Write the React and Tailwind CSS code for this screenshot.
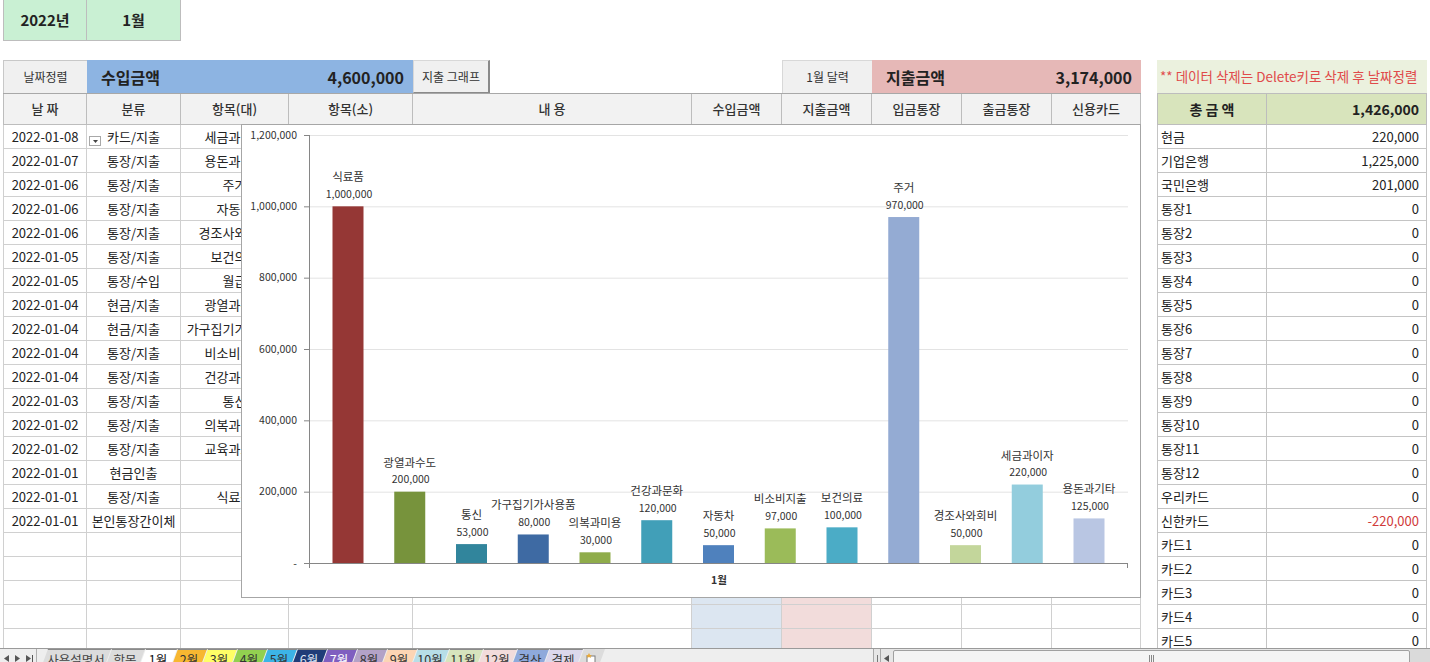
import React from "react";

const colW = ["w-[84px]", "w-[94px]", "w-[108px]", "w-[124px]", "w-[279px]", "w-[90px]", "w-[90px]", "w-[90px]", "w-[90px]", "w-[89px]"];
const heads = ["날 짜", "분류", "항목(대)", "항목(소)", "내 용", "수입금액", "지출금액", "입금통장", "출금통장", "신용카드"];

const rows = [
  ["2022-01-08", "카드/지출", "세금과이자"],
  ["2022-01-07", "통장/지출", "용돈과기타"],
  ["2022-01-06", "통장/지출", "주거"],
  ["2022-01-06", "통장/지출", "자동차"],
  ["2022-01-06", "통장/지출", "경조사와회비"],
  ["2022-01-05", "통장/지출", "보건의료"],
  ["2022-01-05", "통장/수입", "월급"],
  ["2022-01-04", "현금/지출", "광열과수도"],
  ["2022-01-04", "현금/지출", "가구집기가사용품"],
  ["2022-01-04", "통장/지출", "비소비지출"],
  ["2022-01-04", "통장/지출", "건강과문화"],
  ["2022-01-03", "통장/지출", "통신"],
  ["2022-01-02", "통장/지출", "의복과미용"],
  ["2022-01-02", "통장/지출", "교육과보육"],
  ["2022-01-01", "현금인출", ""],
  ["2022-01-01", "통장/지출", "식료품"],
  ["2022-01-01", "본인통장간이체", ""],
  ["", "", ""],
  ["", "", ""],
  ["", "", ""],
  ["", "", ""],
  ["", "", ""],
];

const accounts = [
  ["현금", "220,000"],
  ["기업은행", "1,225,000"],
  ["국민은행", "201,000"],
  ["통장1", "0"],
  ["통장2", "0"],
  ["통장3", "0"],
  ["통장4", "0"],
  ["통장5", "0"],
  ["통장6", "0"],
  ["통장7", "0"],
  ["통장8", "0"],
  ["통장9", "0"],
  ["통장10", "0"],
  ["통장11", "0"],
  ["통장12", "0"],
  ["우리카드", "0"],
  ["신한카드", "-220,000"],
  ["카드1", "0"],
  ["카드2", "0"],
  ["카드3", "0"],
  ["카드4", "0"],
  ["카드5", "0"],
];

const bars = [
  ["식료품", 1000000, "#953735"],
  ["광열과수도", 200000, "#77933c"],
  ["통신", 53000, "#31859c"],
  ["가구집기가사용품", 80000, "#3e6aa3"],
  ["의복과미용", 30000, "#8fac4a"],
  ["건강과문화", 120000, "#419fb8"],
  ["자동차", 50000, "#4f81bd"],
  ["비소비지출", 97000, "#9bbb59"],
  ["보건의료", 100000, "#4bacc6"],
  ["주거", 970000, "#94abd3"],
  ["경조사와회비", 50000, "#c3d69b"],
  ["세금과이자", 220000, "#93cddd"],
  ["용돈과기타", 125000, "#b9c6e3"],
];

const yTicks = [
  [1200000, "1,200,000"],
  [1000000, "1,000,000"],
  [800000, "800,000"],
  [600000, "600,000"],
  [400000, "400,000"],
  [200000, "200,000"],
  [0, "-"],
];

const tabs = [
  { name: "사용설명서", w: "w-[70px]", bg: "bg-[#dcdcdc]", fg: "text-[#444]" },
  { name: "항목", w: "w-[40px]", bg: "bg-[#dcdcdc]", fg: "text-[#444]" },
  { name: "1월", w: "w-[38px]", bg: "bg-white", fg: "text-[#111]" },
  { name: "2월", w: "w-[36px]", bg: "bg-[#f7b731]", fg: "text-[#333]" },
  { name: "3월", w: "w-[36px]", bg: "bg-[#ffff66]", fg: "text-[#333]" },
  { name: "4월", w: "w-[36px]", bg: "bg-[#92d050]", fg: "text-[#333]" },
  { name: "5월", w: "w-[36px]", bg: "bg-[#3cb4e6]", fg: "text-[#333]" },
  { name: "6월", w: "w-[36px]", bg: "bg-[#1f3c78]", fg: "text-[#dfe6f5]" },
  { name: "7월", w: "w-[36px]", bg: "bg-[#7f5fc0]", fg: "text-white" },
  { name: "8월", w: "w-[36px]", bg: "bg-[#b3a2c7]", fg: "text-[#333]" },
  { name: "9월", w: "w-[36px]", bg: "bg-[#fcd5b4]", fg: "text-[#333]" },
  { name: "10월", w: "w-[38px]", bg: "bg-[#b7dee8]", fg: "text-[#333]" },
  { name: "11월", w: "w-[40px]", bg: "bg-[#d7e4bd]", fg: "text-[#333]" },
  { name: "12월", w: "w-[40px]", bg: "bg-[#f2dcdb]", fg: "text-[#333]" },
  { name: "결산", w: "w-[38px]", bg: "bg-[#8ea9db]", fg: "text-[#333]" },
  { name: "결제", w: "w-[40px]", bg: "bg-[#dcd8ec]", fg: "text-[#333]" },
];

function ExpenseChart() {
  const base = 438;
  const y = (v) => base - (v / 1200000) * 428;
  return (
    <div className="absolute left-[241px] top-[124px] w-[900px] h-[474px] bg-white border border-[#a6a6a6]">
      <svg width="898" height="472" className="font-['Noto_Sans_CJK_KR',sans-serif]">
        {yTicks.map(([v, label]) => (
          <g key={label}>
            {v > 0 && <line x1="67" x2="886" y1={y(v) + 0.5} y2={y(v) + 0.5} stroke="#e3e3e3" />}
            <line x1="62" x2="67" y1={y(v) + 0.5} y2={y(v) + 0.5} stroke="#868686" />
            <text x="55" y={y(v)} dy="0.35em" textAnchor="end" fontSize="10.5" fill="#333">{label}</text>
          </g>
        ))}
        <line x1="67.5" x2="67.5" y1="10" y2="443" stroke="#868686" />
        <line x1="62" x2="886" y1="438.5" y2="438.5" stroke="#868686" />
        <line x1="885.5" x2="885.5" y1="438" y2="443" stroke="#868686" />
        {bars.map(([name, v, color], i) => {
          const cx = 106 + i * 61.75;
          const top = y(v);
          return (
            <g key={name}>
              <rect x={cx - 15.5} y={top} width="31" height={base - top} fill={color} />
              <text x={cx} y={top - 29} dy="0.35em" textAnchor="middle" fontSize="11.5" fill="#333">{name}</text>
              <text x={cx + 1} y={top - 12} dy="0.35em" textAnchor="middle" fontSize="10.5" fill="#333">{v.toLocaleString("en-US")}</text>
            </g>
          );
        })}
        <text x="477" y="455" dy="0.35em" textAnchor="middle" fontSize="10.5" fontWeight="bold" fill="#333">1월</text>
      </svg>
    </div>
  );
}

function Tri({ dir }) {
  return (
    <svg width="6" height="7" viewBox="0 0 6 7">
      {dir === "l" ? <path d="M5 0 L0 3.5 L5 7 Z" fill="#555" /> : <path d="M0 0 L5 3.5 L0 7 Z" fill="#555" />}
    </svg>
  );
}

function SheetTabs() {
  return (
    <div className="h-[20px] shrink-0 flex items-stretch bg-[#eeeeee] border-t border-[#9a9a9a] text-[12.5px] leading-none">
      <div className="w-[37px] flex items-center justify-center gap-[5px] border-r border-[#b0b0b0]">
        <Tri dir="l" />
        <Tri dir="r" />
        <div className="flex items-center">
          <Tri dir="r" />
          <div className="w-[1px] h-[7px] bg-[#555]" />
        </div>
      </div>
      <div className="flex pl-[4px]">
        {tabs.map((t, i) => (
          <div
            key={t.name}
            className={`${t.w} ${t.bg} ${t.fg} ${i === 0 ? "" : "-ml-[6px]"} flex items-center justify-center pt-[3px] [clip-path:polygon(7px_0,100%_0,calc(100%-7px)_100%,0_100%)] border-t border-[#8a8a8a]`}
          >
            {t.name}
          </div>
        ))}
        <div className="w-[28px] -ml-[6px] flex items-center justify-center bg-[#dcdcdc] [clip-path:polygon(7px_0,100%_0,calc(100%-7px)_100%,0_100%)]">
          <svg width="12" height="12" viewBox="0 0 12 12">
            <rect x="2" y="3" width="8" height="8" fill="#fff" stroke="#7a7a7a" />
            <path d="M4 0 L5 2 L7 2 L5.5 3.3 L6 5 L4 4 L2 5 L2.5 3.3 L1 2 L3 2 Z" fill="#e9a93a" />
          </svg>
        </div>
      </div>
      <div className="flex-1" />
      <div className="w-[557px] flex items-stretch bg-[#e6e6e6] border-l border-[#a8a8a8]">
        <div className="w-[7px] border-r border-[#a8a8a8] flex items-center justify-center">
          <div className="w-[1px] h-[8px] bg-[#777]" />
        </div>
        <div className="w-[12px] flex items-center justify-center">
          <Tri dir="l" />
        </div>
        <div className="w-[517px] my-[1px] rounded-[2px] border border-[#a0a0a0] bg-[#f4f4f4] flex items-center justify-center">
          <div className="flex gap-[1px]">
            <div className="w-[1px] h-[7px] bg-[#888]" />
            <div className="w-[1px] h-[7px] bg-[#888]" />
            <div className="w-[1px] h-[7px] bg-[#888]" />
          </div>
        </div>
        <div className="flex-1 bg-[#dadada]" />
      </div>
    </div>
  );
}

export default function App() {
  return (
    <div className="w-[1430px] h-[662px] overflow-hidden bg-white flex flex-col font-['Noto_Sans_CJK_KR',sans-serif] text-[#222]">
      <div className="relative h-[648px] shrink-0 overflow-hidden flex pl-[3px]">
        {/* main sheet */}
        <div className="w-[1138px] flex flex-col">
          <div className="h-[41px] flex shrink-0">
            <div className="w-[84px] border-l border-r border-b border-[#bdbdbd] bg-[#c9f0d3] flex items-center justify-center text-[15px] font-bold">2022년</div>
            <div className="w-[94px] border-r border-b border-[#bdbdbd] bg-[#c9f0d3] flex items-center justify-center text-[15px] font-bold">1월</div>
          </div>
          <div className="h-[19px] shrink-0" />
          <div className="h-[33px] flex shrink-0 text-[12px]">
            <div className="w-[84px] bg-[#f0f0f0] border-l border-t border-[#c8c8c8] flex items-center justify-center text-[#333]">날짜정렬</div>
            <div className="w-[326px] bg-[#8db4e2] flex items-center justify-between pl-[14px] pr-[9px] text-[16px] font-bold">
              <span>수입금액</span>
              <span>4,600,000</span>
            </div>
            <div className="w-[77px] bg-[#f0f0f0] border-t border-l border-[#d8d8d8] border-r-2 border-r-[#8a8a8a] border-b border-b-[#8a8a8a] flex items-center justify-center text-[#333]">지출 그래프</div>
            <div className="w-[292px]" />
            <div className="w-[90px] bg-[#f0f0f0] border-t border-l border-[#d8d8d8] flex items-center justify-center text-[#333]">1월 달력</div>
            <div className="w-[269px] bg-[#e6b8b7] flex items-center justify-between pl-[14px] pr-[9px] text-[16px] font-bold">
              <span>지출금액</span>
              <span>3,174,000</span>
            </div>
          </div>
          <div className="h-[32px] flex shrink-0 bg-[#f2f2f2] border-t border-[#a8a8a8]">
            {heads.map((h, i) => (
              <div
                key={h}
                className={`${colW[i]} ${i === 0 ? "border-l" : ""} border-r border-b border-[#bdbdbd] flex items-center justify-center text-[13px] font-medium text-[#333]`}
              >
                {h}
              </div>
            ))}
          </div>
          {rows.map((r, ri) => (
            <div key={ri} className="h-[24px] flex shrink-0 text-[13px]">
              {colW.map((w, ci) => (
                <div
                  key={ci}
                  className={`${w} ${ci === 0 ? "border-l" : ""} ${ci === 5 ? "bg-[#dce6f1]" : ""} ${ci === 6 ? "bg-[#f2dcdb]" : ""} relative border-r border-b border-[#d0d0d0] flex items-center justify-center overflow-hidden whitespace-nowrap`}
                >
                  {ci < 3 ? r[ci] : ""}
                  {ri === 0 && ci === 1 && (
                    <div className="absolute left-[2px] bottom-[2px] w-[12px] h-[10px] border border-[#a8a8a8] bg-white flex items-center justify-center">
                      <svg width="5" height="3" viewBox="0 0 5 3">
                        <path d="M0 0 L5 0 L2.5 3 Z" fill="#444" />
                      </svg>
                    </div>
                  )}
                </div>
              ))}
            </div>
          ))}
        </div>

        {/* totals panel */}
        <div className="ml-[16px] w-[270px] flex flex-col">
          <div className="h-[60px] shrink-0" />
          <div className="h-[33px] shrink-0 bg-[#ebf1de] flex items-center pl-[3px] text-[13.5px] text-[#e04a4a] whitespace-nowrap overflow-hidden">
            ** 데이터 삭제는 Delete키로 삭제 후 날짜정렬
          </div>
          <div className="h-[32px] shrink-0 flex bg-[#d8e4bc] border-t border-[#bdbdbd] text-[14px] font-bold">
            <div className="w-[110px] border-l border-r border-b border-[#bdbdbd] flex items-center justify-center">총 금 액</div>
            <div className="w-[160px] border-r border-b border-[#bdbdbd] flex items-center justify-end pr-[7px]">1,426,000</div>
          </div>
          {accounts.map(([name, val]) => (
            <div key={name} className="h-[24px] shrink-0 flex text-[13px]">
              <div className="w-[110px] border-l border-r border-b border-[#c4c4c4] flex items-center pl-[3px]">{name}</div>
              <div className={`w-[160px] border-r border-b border-[#c4c4c4] flex items-center justify-end pr-[7px] ${val.startsWith("-") ? "text-[#d03a3a]" : ""}`}>{val}</div>
            </div>
          ))}
        </div>

        <ExpenseChart />
      </div>
      <SheetTabs />
    </div>
  );
}
